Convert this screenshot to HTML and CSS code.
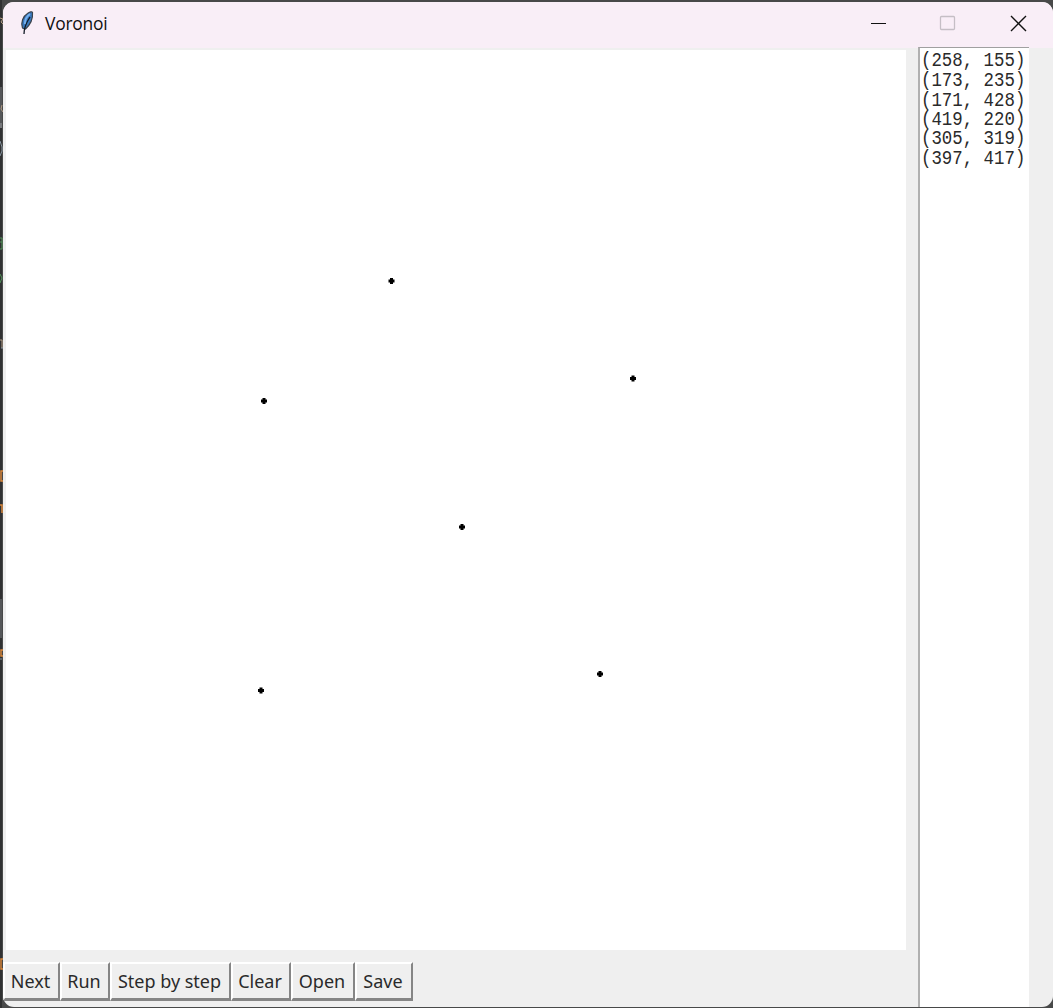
FILE: index.html
```
<!DOCTYPE html>
<html lang="en">
<head>
<meta charset="utf-8">
<title>Voronoi</title>
<link rel="stylesheet" href="styles.css">
</head>
<body>
<svg class="backdrop" width="3" height="1008" viewBox="0 0 3 1008" aria-hidden="true">
  <path fill="#555759" d="M0 87h2v41H0zM0 599h2v39H0z"/>
  <path fill="#77797c" d="M0 123h2v5H0z"/>
  <path stroke="#b29b83" fill="none" d="M0 18l3 1-2 3 2 2M2 105l-1 4 2 3M0 340h2v8"/>
  <path stroke="#8795a0" fill="none" d="M0 141l2 6v4l-2 5M1 348h2M0 659h2"/>
  <path stroke="#529459" fill="none" d="M0 238h2v4H0m2 0v7H0M0 274l2 4-2 5"/>
  <path stroke="#d8873c" stroke-width="1.500" fill="none" d="M3 471H1v10h2M0 505h2v8M3 650H1v6h2M3 959H1v10h2"/>
</svg>
<main class="window">
  <header class="titlebar">
    <svg class="feather" width="16" height="26" viewBox="0 0 16 26">
      <path d="M3.500 18C1.500 13 4 6 8.500 3.500c2-1.500 4.500-2.500 5-1C14 8 12 14 6.500 19z" fill="#3978bd" stroke="#3b434c" stroke-width="1.200"/>
      <path d="M6 14C6 10 8 6 11 4" fill="none" stroke="#75b0ee" stroke-width="2"/>
      <path d="M5 24c0-6 2-11 6-17" fill="none" stroke="#111a25" stroke-width="1.300"/>
    </svg>
    <h1 class="title">Voronoi</h1>
    <svg class="controls" width="160" height="20" viewBox="0 0 160 20">
      <path d="M1 10.500h15" stroke="#111"/>
      <rect x="70.500" y="3.500" width="14" height="13" rx="1" fill="none" stroke="#c5bec5" stroke-width="1.300"/>
      <path d="M141 3l15 15M156 3l-15 15" stroke="#111" stroke-width="1.400"/>
    </svg>
  </header>
  <div class="content">
    <section class="workspace">
      <svg class="plot" width="900" height="900" viewBox="0 0 900 900">
        <defs><path id="site" d="M-1.500-3h3v1.500H3v3H1.500V3h-3V1.500H-3v-3h1.500z"/></defs>
        <g class="points">
          <use href="#site" x="385.500" y="231"/>
          <use href="#site" x="258" y="351"/>
          <use href="#site" x="627" y="328.500"/>
          <use href="#site" x="456" y="477"/>
          <use href="#site" x="255" y="640.500"/>
          <use href="#site" x="594" y="624"/>
        </g>
      </svg>
      <nav class="toolbar">
        <button class="tool">Next</button>
        <button class="tool">Run</button>
        <button class="tool">Step by step</button>
        <button class="tool">Clear</button>
        <button class="tool">Open</button>
        <button class="tool">Save</button>
      </nav>
    </section>
    <aside class="listbox">
      <pre class="coordinates">(258, 155)
(173, 235)
(171, 428)
(419, 220)
(305, 319)
(397, 417)</pre>
    </aside>
  </div>
</main>
</body>
</html>
```

FILE: styles.css
```
* { box-sizing: border-box; }
body {
  margin: 0;
  width: 1053px;
  height: 1008px;
  overflow: hidden;
  display: flex;
  background: linear-gradient(90deg, #303132 0 2px, #484949 2px);
}
.backdrop { flex: none; }
.window {
  width: 1050px;
  height: 1005px;
  margin-top: 2px;
  background: #efefef;
  border-radius: 11px;
  overflow: hidden;
}
.titlebar {
  height: 46px;
  background: #f9eef7;
  display: flex;
  align-items: flex-start;
}
.feather { margin: 8px 0 0 16px; }
.title {
  margin: 10px 0 0 10px;
  font: 400 17.400px/22px "Open Sans", "Noto Sans", sans-serif;
  letter-spacing: -0.200px;
  color: #111;
}
.controls { margin: 11px 23px 0 auto; }
.content { height: 959px; display: flex; }
.workspace { width: 915px; padding: 2px 0 0 3px; }
.plot { display: block; background: #fff; }
.points { fill: #000; }
.toolbar {
  margin: 12px 0 0 -3px;
  display: grid;
  grid-template-columns: 57px 50px 121px 60px 64px 58px;
  height: 39px;
}
.tool {
  padding: 0 2px 1px 0;
  border: solid;
  border-width: 2px 2px 3px 2px;
  border-color: #fff #858585 #858585 #fff;
  background: #efefef;
  color: #2a2a2a;
  font: 18px/30px "Noto Sans", sans-serif;
  white-space: nowrap;
}
.listbox {
  width: 111px;
  height: 960px;
  margin-top: -1px;
  background: #fff;
  border-left: 2px solid #b0b0b0;
  border-top: 1px solid #a0a0a0;
}
.coordinates {
  margin: 3.500px 0 0 1px;
  font: 17.400px/16.250px "Liberation Mono", monospace;
  color: #2a2a2a;
  transform: scaleY(1.2);
  transform-origin: top;
}
```
